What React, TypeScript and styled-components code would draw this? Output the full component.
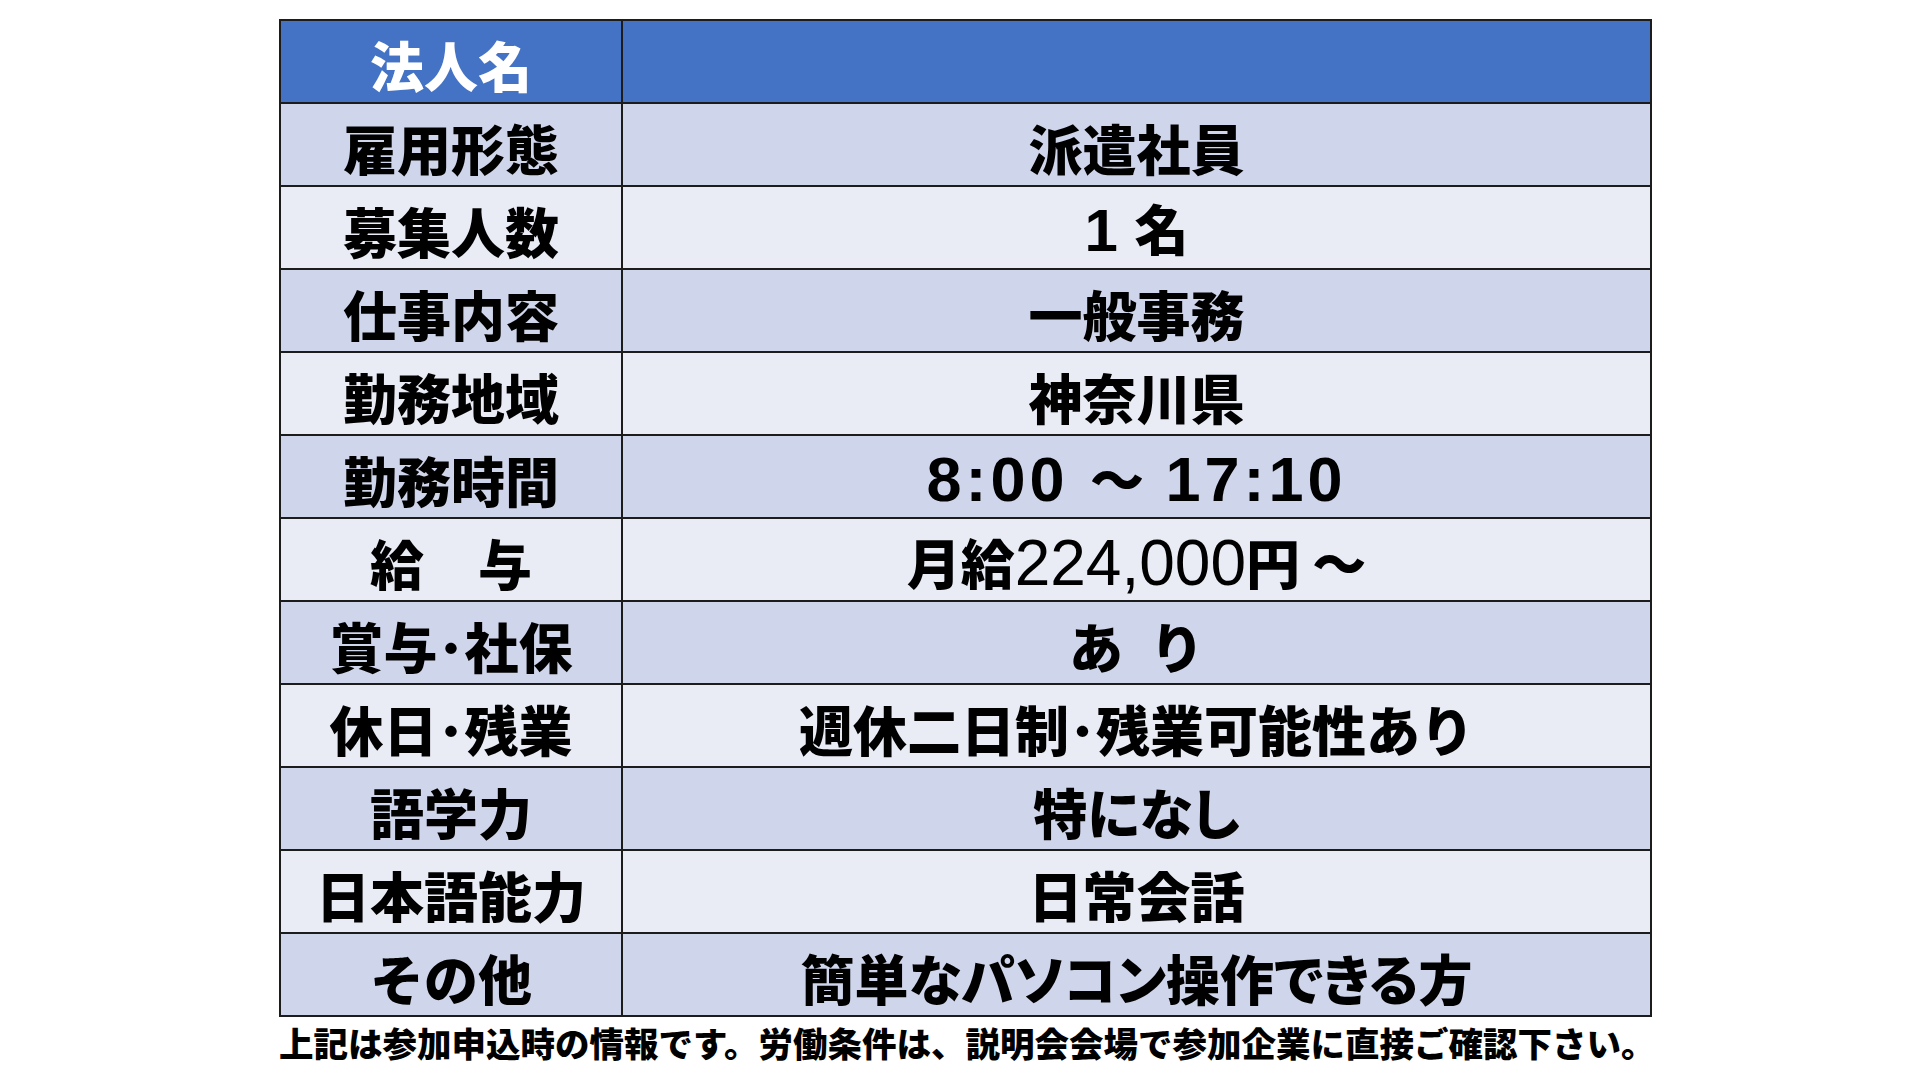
import React from 'react';
import styled, { createGlobalStyle } from 'styled-components';

const GlobalStyle = createGlobalStyle`
  html, body {
    margin: 0;
    padding: 0;
    background: #ffffff;
  }
  body {
    font-family: "Noto Sans CJK JP", "Noto Sans", sans-serif;
    color: #000;
  }
`;

const Page = styled.div`
  width: 1920px;
  height: 1080px;
  padding: 19px 0 0 279px;
  box-sizing: border-box;
  overflow: hidden;
`;

const Sheet = styled.div`
  width: 1373px;
  display: flex;
  flex-direction: column;
`;

const Table = styled.table`
  width: 1373px;
  border-collapse: collapse;
  border: 2px solid #1c1c1c;
  table-layout: fixed;
`;

const Row = styled.tr<{ $shade: 'head' | 'dark' | 'light' }>`
  height: 83px;
  background: ${(p) =>
    p.$shade === 'head' ? '#4472c4' : p.$shade === 'dark' ? '#cfd5ea' : '#e9ebf5'};
`;

const Label = styled.th<{ $head?: boolean }>`
  width: 340px;
  padding: 6px 0 0 0;
  border: 2px solid #1c1c1c;
  font-size: 54px;
  font-weight: 900;
  line-height: 1;
  text-align: center;
  vertical-align: middle;
  white-space: pre;
  color: ${(p) => (p.$head ? '#ffffff' : '#000000')};
`;

const Value = styled.td<{ $palt?: boolean }>`
  padding: 6px 0 0 0;
  border: 2px solid #1c1c1c;
  font-size: 54px;
  font-weight: 900;
  line-height: 1;
  text-align: center;
  vertical-align: middle;
  white-space: pre;
  font-feature-settings: ${(p) => (p.$palt ? '"palt" 1' : 'normal')};
`;

const Latin = styled.span<{ $size: number; $weight: number; $track?: number }>`
  font-family: "Liberation Sans", Arial, sans-serif;
  font-size: ${(p) => p.$size}px;
  font-weight: ${(p) => p.$weight};
  letter-spacing: ${(p) => p.$track ?? 0}px;
`;

const Note = styled.p`
  margin: 8px 0 0 0;
  font-size: 34.5px;
  font-weight: 900;
  line-height: 1;
  white-space: nowrap;
`;

type Item = { label: string; value: React.ReactNode; palt?: boolean };

const rows: Item[] = [
  { label: '雇用形態', value: '派遣社員' },
  {
    label: '募集人数',
    value: (
      <>
        <Latin $size={60} $weight={700}>1 </Latin>名
      </>
    ),
  },
  { label: '仕事内容', value: '一般事務' },
  { label: '勤務地域', value: '神奈川県' },
  {
    label: '勤務時間',
    value: (
      <>
        <Latin $size={63} $weight={700} $track={4}>8:00 </Latin>～
        <Latin $size={63} $weight={700} $track={4}> 17:10</Latin>
      </>
    ),
  },
  {
    label: '給　与',
    value: (
      <>
        月給<Latin $size={64} $weight={400}>224,000</Latin>円 ～
      </>
    ),
  },
  { label: '賞与･社保', value: 'あ\u2002り' },
  { label: '休日･残業', value: '週休二日制･残業可能性あり' },
  { label: '語学力', value: '特になし', palt: true },
  { label: '日本語能力', value: '日常会話' },
  { label: 'その他', value: '簡単なパソコン操作できる方', palt: true },
];

export default function App() {
  return (
    <>
      <GlobalStyle />
      <Page>
        <Sheet>
          <Table>
            <tbody>
              <Row $shade="head">
                <Label $head>法人名</Label>
                <Value />
              </Row>
              {rows.map((r, i) => (
                <Row key={r.label} $shade={i % 2 === 0 ? 'dark' : 'light'}>
                  <Label>{r.label}</Label>
                  <Value $palt={r.palt}>{r.value}</Value>
                </Row>
              ))}
            </tbody>
          </Table>
          <Note>上記は参加申込時の情報です。労働条件は、説明会会場で参加企業に直接ご確認下さい。</Note>
        </Sheet>
      </Page>
    </>
  );
}
